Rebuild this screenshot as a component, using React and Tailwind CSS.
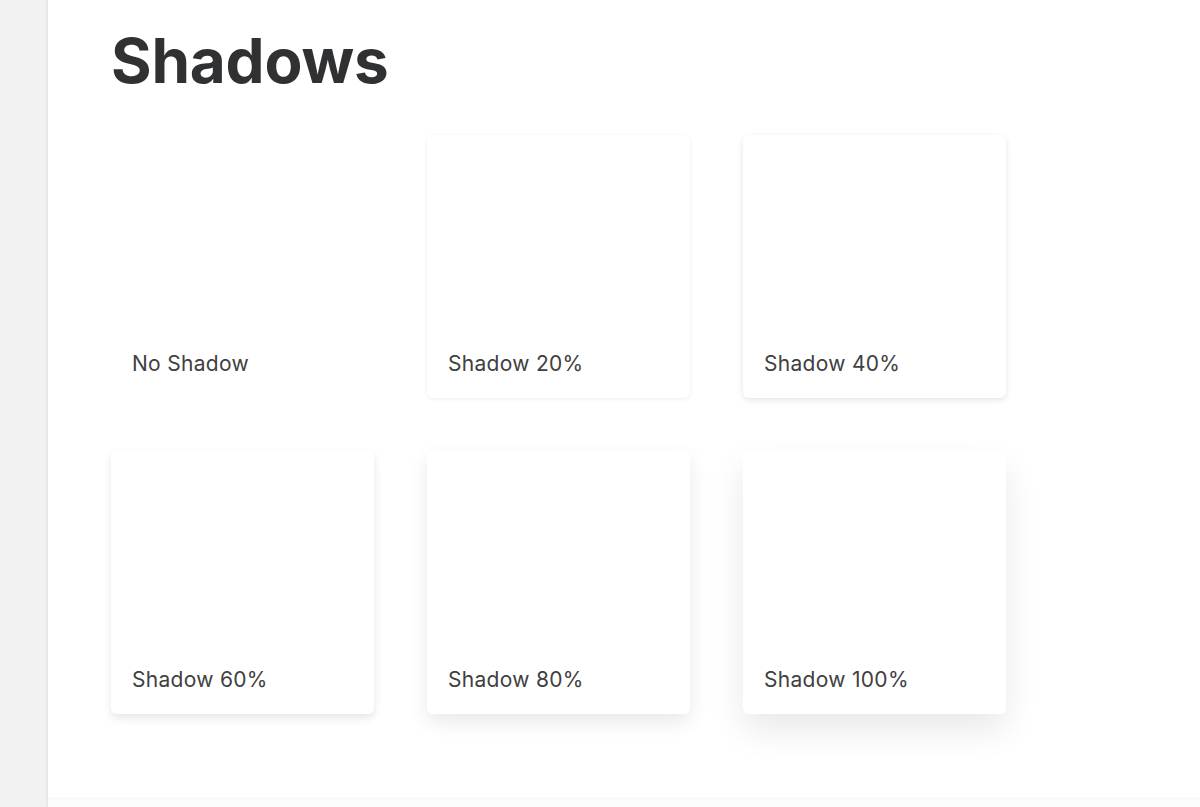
const cards = [
  { label: "No Shadow", shadow: "shadow-none" },
  { label: "Shadow 20%", shadow: "shadow-[0_1px_4px_rgba(0,0,0,0.07)]" },
  { label: "Shadow 40%", shadow: "shadow-[0_2px_6px_rgba(0,0,0,0.11)]" },
  { label: "Shadow 60%", shadow: "shadow-[0_4px_10px_rgba(0,0,0,0.1)]" },
  { label: "Shadow 80%", shadow: "shadow-[0_8px_20px_rgba(0,0,0,0.09)]" },
  { label: "Shadow 100%", shadow: "shadow-[0_16px_34px_rgba(0,0,0,0.09)]" },
];

const App = () => {
  return (
    <div className="flex min-h-[807px] w-full bg-[#fcfcfc] font-['Inter',sans-serif]">
      <div className="w-[48px] shrink-0 bg-[#f2f2f2] border-r-2 border-[#e9e9e9]" />
      <main className="flex-1 h-[797px] bg-white pl-[63px] pt-[30px] shadow-[0_1px_4px_rgba(0,0,0,0.02)]">
        <h1 className="text-[62px] leading-[62px] font-bold text-[#2f3133] tracking-[-0.2px]">
          Shadows
        </h1>
        <div className="mt-[43px] grid grid-cols-[repeat(3,263px)] gap-[53px]">
          {cards.map((card) => (
            <div
              key={card.label}
              className={`h-[263px] rounded-[6px] bg-white flex flex-col justify-end px-[21px] pb-[20px] ${card.shadow}`}
            >
              <p className="text-[21px] leading-[28px] text-[#404040] tracking-[0.3px]">
                {card.label}
              </p>
            </div>
          ))}
        </div>
      </main>
    </div>
  );
};

export default App;
